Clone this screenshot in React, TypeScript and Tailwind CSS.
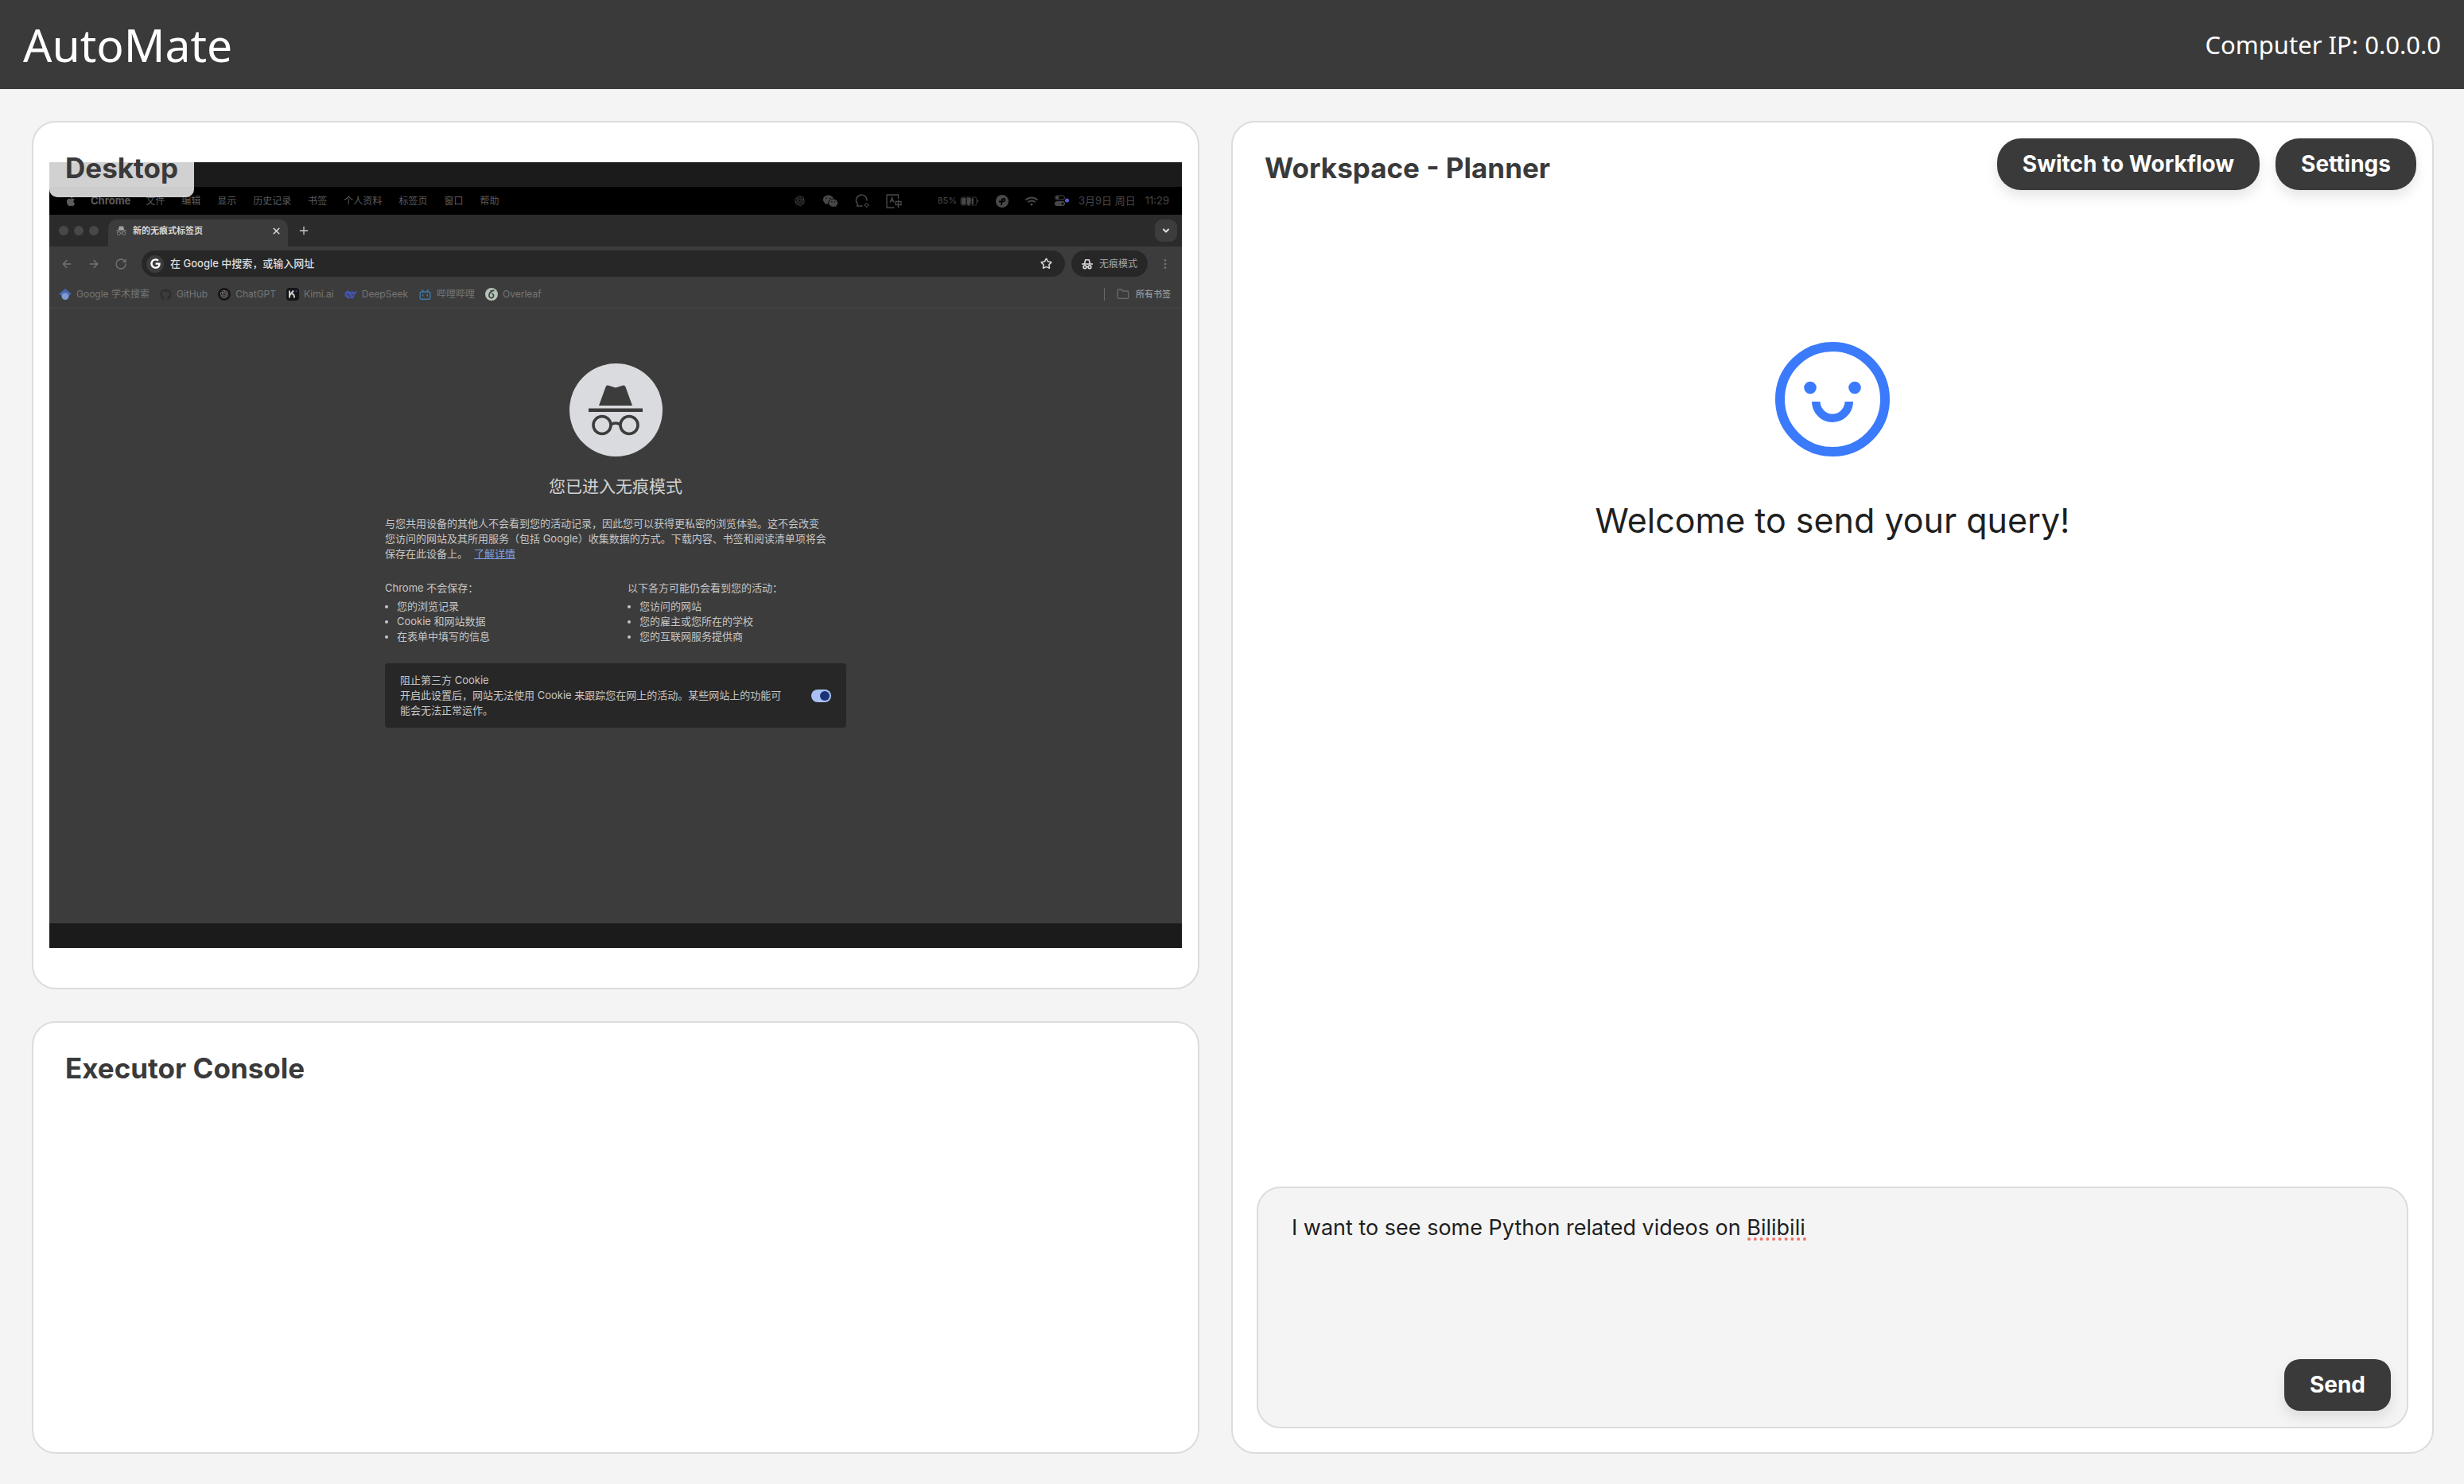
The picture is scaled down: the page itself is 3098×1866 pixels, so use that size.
import type { ReactNode } from "react";
import { ArrowLeft, ArrowRight, ChevronDown, EllipsisVertical, Folder, Plus, RotateCw, Star, X } from "lucide-react";
import { FaApple, FaGithub, FaGoogle, FaWifi } from "react-icons/fa";
import { RiBilibiliLine, RiOpenaiFill, RiWechatFill } from "react-icons/ri";

const PANEL = "rounded-[30px] border-2 border-[#dcdcdc] bg-white";
const HEADING = "text-[35px] leading-[42px] font-bold text-[#3a3a3a]";
const DARK_BUTTON = "bg-[#3a3a3a] px-8 text-[28px] leading-[33px] font-bold text-white shadow-[0_8px_16px_rgba(0,0,0,0.1)]";

const MENUS = ["文件", "编辑", "显示", "历史记录", "书签", "个人资料", "标签页", "窗口", "帮助"];

function Incognito({ className }: { className: string }) {
  return (
    <svg viewBox="24 26 68 64" className={className} fill="currentColor" aria-hidden="true">
      <path d="M37 52 45.500 28.500Q46.500 26 49 26.700L58 29.500 67 26.700Q69.500 26 70.500 28.500L79 52Z" />
      <rect x="24" y="55.500" width="68" height="4.500" />
      <g fill="none" stroke="currentColor" strokeWidth="3.600">
        <circle cx="41" cy="76.500" r="11" />
        <circle cx="75" cy="76.500" r="11" />
        <path d="M52 76q6-4 12 0" />
      </g>
    </svg>
  );
}

function IncognitoSmall() {
  return (
    <svg viewBox="0 0 14 14" className="size-[14px]" fill="none" stroke="currentColor" strokeWidth="1.600" aria-hidden="true">
      <path d="M3.500 6.500 4.800 1.800h4.400l1.300 4.700M0 7h14" />
      <circle cx="4" cy="10.800" r="1.900" />
      <circle cx="10" cy="10.800" r="1.900" />
      <path d="M6 10.500h2" />
    </svg>
  );
}

function Scholar() {
  return (
    <svg viewBox="0 0 16 16" className="size-4" aria-hidden="true">
      <path d="M8 1 16 7.500 8 13 0 7.500Z" fill="#4866b0" />
      <circle cx="8" cy="10.500" r="4.500" fill="#7f9ad0" />
      <path d="M3.700 9a4.800 4.800 0 0 1 8.600 0L8 6.500Z" fill="#6a86c4" />
    </svg>
  );
}

function Kimi() {
  return (
    <svg viewBox="0 0 16 16" className="size-4" aria-hidden="true">
      <rect width="16" height="16" rx="4" fill="#151518" />
      <path d="M4 3.500v9M4.500 9 9 3.500M7 7.500q3 0 3 5" fill="none" stroke="#cfcfcf" strokeWidth="2" />
      <circle cx="12.500" cy="4" r="1" fill="#3a48a0" />
    </svg>
  );
}

function DeepSeek() {
  return (
    <svg viewBox="0 0 16 16" className="size-4" aria-hidden="true">
      <path
        d="M.5 8C.5 5 3 3.200 5.300 3.700c1.500.3 2.600 1.300 3.400 2.400.3-1 .2-2.200.9-3.100.4 1.100 1 1.900 2 2.100 1.600.2 2.700-.6 4.200-1.800-.1 2.400-1 4-2.700 4.800-.3 1.900-1 3.200-2.300 4.200l1 1.200c-1 .2-1.800-.1-2.500-.6C5 14.300.5 12 .5 8Z"
        fill="#4553ae"
      />
      <path d="M3 8.200c2 0 3.500 1.500 5 3.600M9 7.800q1.500.3 2 1.700" fill="none" stroke="#3c3c3c" strokeWidth="1.200" />
    </svg>
  );
}

function Overleaf() {
  return (
    <svg viewBox="0 0 16 16" className="size-4" aria-hidden="true">
      <circle cx="8" cy="8" r="8" fill="#b9c0b9" />
      <path d="M11.500 3.200C7.500 4 5 6.500 5 9.500a2.800 2.800 0 1 0 3-2.500M6.500 4.500q2-1.500 4-1" fill="none" stroke="#2f4f3c" strokeWidth="1.700" />
    </svg>
  );
}

function ChatSpark() {
  return (
    <svg viewBox="0 0 18 18" className="size-[18px]" fill="none" stroke="currentColor" strokeWidth="1.500" aria-hidden="true">
      <path d="M9.500 15H2.500l1-2.300A6.800 6.800 0 1 1 15 8.500" />
      <path d="m14.500 11 1 2 2 1-2 1-1 2-1-2-2-1 2-1Z" strokeWidth="1" />
    </svg>
  );
}

function Translate() {
  return (
    <svg viewBox="0 0 20 18" className="h-[18px] w-5" fill="none" stroke="currentColor" strokeWidth="1.300" aria-hidden="true">
      <path d="M15.500 6V1H1v16h9.500" />
      <path d="M5 10.500 7.500 4.500l2.500 6M6 8.500h3" />
      <path d="M12 9.500h7v4h-7ZM15.500 7.500v10" />
    </svg>
  );
}

function Battery() {
  return (
    <svg viewBox="0 0 24 12" className="h-3 w-6" aria-hidden="true">
      <rect x="1" y="1" width="20" height="10" rx="2.500" fill="none" stroke="currentColor" strokeWidth=".8" />
      <rect x="2" y="2" width="15" height="8" rx="1.500" fill="currentColor" />
      <path d="M8 0v12M14 0v12" stroke="#000" strokeWidth="1.200" />
      <path d="M9.800 1v3M12.200 1v3M8.800 4h4.400v1.500L11 8.500v3" fill="none" stroke="currentColor" strokeWidth="1.200" />
      <path d="M22.500 4.500v3" stroke="currentColor" />
    </svg>
  );
}

function PinBadge() {
  return (
    <svg viewBox="0 0 16 16" className="size-4" aria-hidden="true">
      <circle cx="8" cy="8" r="8" fill="currentColor" />
      <path d="M7 13 8 5.500q3.500-1.500 3.500.8T8 8.500H4" fill="none" stroke="#000" strokeWidth="1.800" />
    </svg>
  );
}

function Controls() {
  return (
    <svg viewBox="0 0 18 14" className="h-[14px] w-[18px]" aria-hidden="true">
      <rect x=".6" y="1" width="12" height="5" rx="2.500" fill="none" stroke="currentColor" />
      <circle cx="3.500" cy="3.500" r="2" fill="currentColor" />
      <rect x="0" y="8" width="13" height="6" rx="3" fill="currentColor" />
      <circle cx="10" cy="11" r="1.500" fill="#000" />
      <circle cx="15.500" cy="7" r="2.500" fill="#5a5ad0" />
    </svg>
  );
}

function Smile() {
  return (
    <svg viewBox="0 0 144 144" className="size-36" fill="none" stroke="#3b7afa" aria-hidden="true">
      <circle cx="72" cy="72" r="66" strokeWidth="12" />
      <circle cx="44" cy="57.500" r="7.800" fill="#3b7afa" stroke="none" />
      <circle cx="100" cy="57.500" r="7.800" fill="#3b7afa" stroke="none" />
      <path d="M51.300 75a20.700 20.700 0 0 0 41.400 0" strokeWidth="10.500" />
    </svg>
  );
}

function Bookmark({ icon, label }: { icon: ReactNode; label: string }) {
  return (
    <a href="#" className="flex items-center gap-[6px]">
      {icon}
      {label}
    </a>
  );
}

function InfoList({ title, items }: { title: string; items: string[] }) {
  return (
    <div>
      <p>{title}</p>
      <ul className="mt-1 list-disc pl-[15px]">
        {items.map((item) => (
          <li key={item}>{item}</li>
        ))}
      </ul>
    </div>
  );
}

function MacMenuBar() {
  return (
    <div className="flex h-[35px] items-center bg-black pr-4 pl-5 text-xs text-[#5c5c5c]">
      <FaApple className="mr-[18px] size-[14px]" />
      <span className="mr-[19px] text-[13px] font-bold">Chrome</span>
      <div className="flex gap-[21px]">
        {MENUS.map((m) => (
          <span key={m}>{m}</span>
        ))}
      </div>
      <div className="ml-auto flex items-center gap-[21px] text-[#484848]">
        <RiOpenaiFill className="size-[15px]" />
        <RiWechatFill className="size-5" />
        <ChatSpark />
        <Translate />
        <span className="ml-6 flex items-center gap-1 text-[11px]">
          85% <Battery />
        </span>
        <PinBadge />
        <FaWifi className="size-4" />
        <span className="flex items-center gap-3">
          <Controls />
          <span className="text-[13px]">3月9日 周日</span>
          <span className="text-[13px]">11:29</span>
        </span>
      </div>
    </div>
  );
}

function TabStrip() {
  return (
    <div className="flex h-10 items-center bg-[#2b2b2b] pr-[6px] pl-3">
      <div className="flex gap-[7px]">
        <span className="size-3 rounded-full bg-[#484848]" />
        <span className="size-3 rounded-full bg-[#484848]" />
        <span className="size-3 rounded-full bg-[#484848]" />
      </div>
      <div className="ml-3 flex h-[34px] w-[226px] items-center self-end rounded-t-[10px] bg-[#3c3c3c] pr-2 pb-[6px] pl-[10px] text-[11px] font-semibold text-[#d8d8d8]">
        <span className="text-[#a0a0a0]">
          <Incognito className="h-3 w-[13px]" />
        </span>
        <span className="ml-2">新的无痕式标签页</span>
        <button aria-label="关闭" className="ml-auto text-[#d8d8d8]">
          <X className="size-[13px]" strokeWidth={3} />
        </button>
      </div>
      <button aria-label="新标签页" className="ml-3 text-[#c8c8c8]">
        <Plus className="size-4" />
      </button>
      <button aria-label="搜索标签页" className="ml-auto flex size-7 items-center justify-center rounded-[9px] bg-[#3c3c3c] text-[#e0e0e0]">
        <ChevronDown className="size-3" strokeWidth={4} />
      </button>
    </div>
  );
}

function AddressRow() {
  return (
    <div className="flex items-center bg-[#3c3c3c] pt-[5px] pr-[13px] pl-[14px] text-[#747474]">
      <div className="flex gap-[18px]">
        <ArrowLeft className="size-4" />
        <ArrowRight className="size-4" />
        <RotateCw className="size-4" />
      </div>
      <div className="ml-[18px] flex h-[33px] flex-1 items-center rounded-full bg-[#272727] pr-4 pl-[6px]">
        <span className="flex size-[22px] items-center justify-center rounded-full bg-[#3c3c3c] text-white">
          <FaGoogle className="size-[13px]" />
        </span>
        <input
          aria-label="地址"
          placeholder="在 Google 中搜索，或输入网址"
          className="ml-2 flex-1 bg-transparent text-[13px] font-medium outline-none placeholder:text-[#dedede]"
        />
        <Star className="size-[15px] text-[#d8d8d8]" strokeWidth={2.500} />
      </div>
      <div className="ml-2 flex h-[33px] items-center gap-2 rounded-full bg-[#272727] px-[13px] text-xs text-[#a4a4a4]">
        <span className="text-[#dedede]">
          <IncognitoSmall />
        </span>
        无痕模式
      </div>
      <EllipsisVertical className="ml-[14px] size-4" />
    </div>
  );
}

function BookmarkRow() {
  return (
    <div className="flex h-10 items-center border-b-2 border-[#424242] bg-[#3c3c3c] pt-[6px] pr-[14px] pl-3 text-xs text-[#767676]">
      <div className="flex gap-[13px]">
        <Bookmark icon={<Scholar />} label="Google 学术搜索" />
        <Bookmark icon={<FaGithub className="size-[15px] text-[#2f2f2f]" />} label="GitHub" />
        <Bookmark
          icon={
            <span className="flex size-4 items-center justify-center rounded-full bg-[#181818]">
              <RiOpenaiFill className="size-3 text-[#8c8c8c]" />
            </span>
          }
          label="ChatGPT"
        />
        <Bookmark icon={<Kimi />} label="Kimi.ai" />
        <Bookmark icon={<DeepSeek />} label="DeepSeek" />
        <Bookmark icon={<RiBilibiliLine className="size-[17px] text-[#3f78a8]" />} label="哔哩哔哩" />
        <Bookmark icon={<Overleaf />} label="Overleaf" />
      </div>
      <span className="ml-auto h-4 w-px bg-[#6a6a6a]" />
      <a href="#" className="ml-[15px] flex items-center gap-2 text-[11px] font-medium text-[#9a9a9a]">
        <Folder className="size-4 text-[#6c6c6c]" />
        所有书签
      </a>
    </div>
  );
}

function IncognitoPage() {
  return (
    <div className="flex h-[773px] flex-col items-center bg-[#3c3c3c] pt-[69px] text-[#c6c6c6]">
      <span className="flex size-[117px] items-center justify-center rounded-full bg-[#dadbdf] text-[#3c3c3c]">
        <Incognito className="h-16 w-[68px]" />
      </span>
      <h3 className="mt-[23px] text-[21px] leading-[30px] text-[#d2d2d2]">您已进入无痕模式</h3>
      <div className="w-[580px] text-[13px] leading-[19px] whitespace-nowrap">
        <p className="mt-[22px]">
          与您共用设备的其他人不会看到您的活动记录，因此您可以获得更私密的浏览体验。这不会改变
          <br />
          您访问的网站及其所用服务（包括 Google）收集数据的方式。下载内容、书签和阅读清单项将会
          <br />
          保存在此设备上。
          <a href="#" className="ml-2 text-[#7f9fe0] underline">
            了解详情
          </a>
        </p>
        <div className="mt-6 grid grid-cols-[305px_1fr]">
          <InfoList title="Chrome 不会保存：" items={["您的浏览记录", "Cookie 和网站数据", "在表单中填写的信息"]} />
          <InfoList title="以下各方可能仍会看到您的活动：" items={["您访问的网站", "您的雇主或您所在的学校", "您的互联网服务提供商"]} />
        </div>
        <div className="mt-6 flex items-center justify-between rounded bg-[#272727] px-[19px] py-3">
          <label htmlFor="cookies">
            阻止第三方 Cookie
            <br />
            开启此设置后，网站无法使用 Cookie 来跟踪您在网上的活动。某些网站上的功能可
            <br />
            能会无法正常运作。
          </label>
          <input
            id="cookies"
            type="checkbox"
            defaultChecked
            className="flex h-4 w-[25px] appearance-none items-center justify-end rounded-full bg-[#a9c1f5] pr-[2px] before:size-3 before:rounded-full before:bg-[#1b3277]"
          />
        </div>
      </div>
    </div>
  );
}

function DesktopPreview() {
  return (
    <div className="w-full bg-[#1b1b1b] py-[31px] font-[Inter,'Noto_Sans_CJK_SC',sans-serif]">
      <MacMenuBar />
      <TabStrip />
      <AddressRow />
      <BookmarkRow />
      <IncognitoPage />
    </div>
  );
}

export default function App() {
  return (
    <div className="flex h-screen flex-col bg-[#f4f4f4] font-[Inter,sans-serif] text-[#1f1f1f]">
      <header className="flex h-28 shrink-0 items-center justify-between bg-[#3a3a3a] px-[29px] font-['Noto_Sans',sans-serif] text-white">
        <h1 className="text-[57px] leading-none">AutoMate</h1>
        <p className="text-[31px]">Computer IP: 0.0.0.0</p>
      </header>

      <main className="grid min-h-0 flex-1 grid-cols-[1468fr_1512fr] gap-10 pt-10 pr-[38px] pb-[38px] pl-10">
        <div className="grid min-h-0 grid-rows-[1092fr_544fr] gap-10">
          <section className={`${PANEL} relative flex min-h-0 items-center p-5`}>
            <DesktopPreview />
            <h2 className={`${HEADING} absolute top-5 left-5 rounded-[10px] bg-white/80 px-5 py-4`}>Desktop</h2>
          </section>
          <section className={`${PANEL} px-10 py-9`}>
            <h2 className={HEADING}>Executor Console</h2>
          </section>
        </div>

        <section className={`${PANEL} flex min-h-0 flex-col`}>
          <div className="flex items-start justify-between pt-5 pr-5 pl-10">
            <h2 className={`${HEADING} mt-4`}>Workspace - Planner</h2>
            <div className="flex gap-5">
              <button className={`${DARK_BUTTON} rounded-[30px] py-4`}>Switch to Workflow</button>
              <button className={`${DARK_BUTTON} rounded-[30px] py-4`}>Settings</button>
            </div>
          </div>

          <div className="flex flex-1 flex-col items-center pt-[191px]">
            <Smile />
            <p className="mt-[46px] text-[43px] leading-[68px]">Welcome to send your query!</p>
          </div>

          <div className="relative m-[30px] flex h-[304px] rounded-[30px] border-2 border-[#dcdcdc] bg-[#f4f4f4]">
            <textarea
              aria-label="Query"
              spellCheck={false}
              defaultValue="I want to see some Python related videos on Bilibili"
              className="flex-1 resize-none bg-transparent px-[42px] py-[30px] text-[27px] leading-10 outline-none"
            />
            <span className="absolute top-[62px] left-[615px] w-[74px] border-b-4 border-dotted border-[#f07468]" />
            <button className={`${DARK_BUTTON} absolute right-5 bottom-5 rounded-[20px] py-4`}>Send</button>
          </div>
        </section>
      </main>
    </div>
  );
}
